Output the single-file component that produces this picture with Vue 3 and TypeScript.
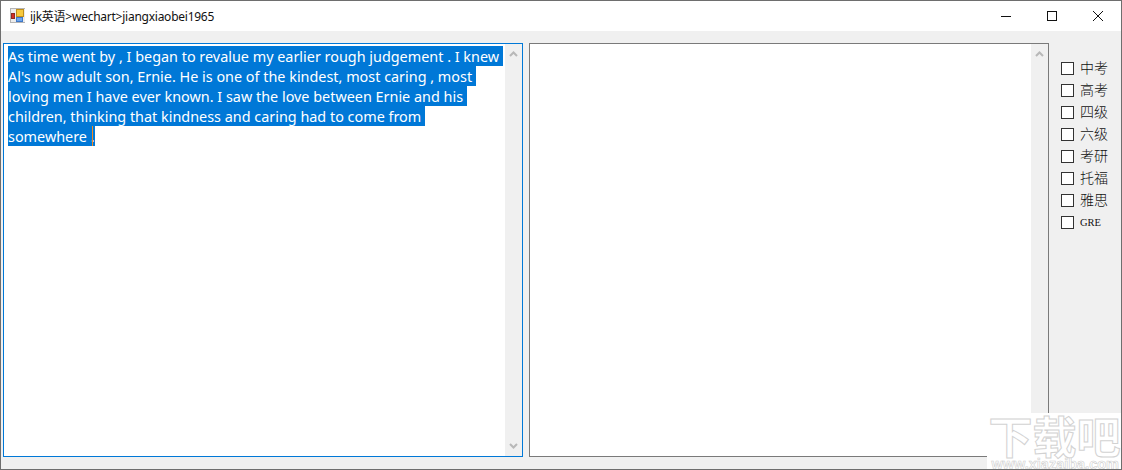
<script setup lang="ts">
const lines: string[] = [
  "As time went by , I began to revalue my earlier rough judgement . I knew ",
  "Al's now adult son, Ernie. He is one of the kindest, most caring , most ",
  "loving men I have ever known. I saw the love between Ernie and his ",
  "children, thinking that kindness and caring had to come from ",
  "somewhere .",
];
const options: string[] = ["中考", "高考", "四级", "六级", "考研", "托福", "雅思", "GRE"];
</script>

<template>
  <div class="window">
    <header class="titlebar">
      <svg class="app-icon" width="16" height="16" viewBox="0 0 16 16">
        <path d="M0 0.5h15M0.5 0v15M0 14.5h15" stroke="#b4b4b4" fill="none" />
        <rect x="1" y="1" width="14" height="13" fill="#ececec" />
        <rect x="6.5" y="1.5" width="7" height="7" fill="#f7c93e" stroke="#c08f1a" />
        <rect x="1.5" y="5.5" width="3" height="5" fill="#d42d26" stroke="#8d2a22" />
        <rect x="6.5" y="9.5" width="6" height="4" fill="#6ea6ec" stroke="#3f78c8" />
      </svg>
      <span class="title">ijk英语&gt;wechart&gt;jiangxiaobei1965</span>
      <div class="controls">
        <svg width="46" height="30" viewBox="0 0 46 30"><path d="M18 15.5h10" stroke="#111" fill="none" /></svg>
        <svg width="46" height="30" viewBox="0 0 46 30"><rect x="18.5" y="10.5" width="9" height="9" stroke="#111" fill="none" /></svg>
        <svg width="46" height="30" viewBox="0 0 46 30"><path d="M18 10l10 10M28 10l-10 10" stroke="#111" fill="none" /></svg>
      </div>
    </header>

    <main class="content">
      <section class="box box-active">
        <div class="text">
          <span v-for="line in lines" :key="line" class="line">{{ line }}</span>
          <span class="caret"></span>
        </div>
        <div class="scrollbar">
          <svg width="9" height="6" viewBox="0 0 9 6"><path d="M1 5l3.5-3.5L8 5" stroke="#b8b8b8" stroke-width="2" fill="none" /></svg>
          <svg width="9" height="6" viewBox="0 0 9 6"><path d="M1 1l3.5 3.5L8 1" stroke="#b8b8b8" stroke-width="2" fill="none" /></svg>
        </div>
      </section>

      <section class="box">
        <div class="text"></div>
        <div class="scrollbar">
          <svg width="9" height="6" viewBox="0 0 9 6"><path d="M1 5l3.5-3.5L8 5" stroke="#b8b8b8" stroke-width="2" fill="none" /></svg>
          <svg width="9" height="6" viewBox="0 0 9 6"><path d="M1 1l3.5 3.5L8 1" stroke="#b8b8b8" stroke-width="2" fill="none" /></svg>
        </div>
      </section>

      <aside class="options">
        <label v-for="o in options" :key="o" class="option">
          <span class="check"></span>
          <span class="opt-text" :class="{ latin: o === 'GRE' }">{{ o }}</span>
        </label>
      </aside>
    </main>

    <div class="watermark">
      <span class="wm-big">下载吧</span>
      <span class="wm-small">www.xiazaiba.com</span>
    </div>
  </div>
</template>

<style>
html, body { margin: 0; padding: 0; background: #fff; }
</style>

<style scoped>
.window {
  position: relative;
  width: 1122px;
  height: 470px;
  box-sizing: border-box;
  border: 1px solid #6e6e6e;
  background: #f0f0f0;
  display: flex;
  flex-direction: column;
  overflow: hidden;
  font-family: "Noto Sans", "Noto Sans CJK SC", sans-serif;
}
.titlebar {
  height: 30px;
  flex: none;
  background: #fff;
  display: flex;
  align-items: center;
  padding-left: 9px;
}
.app-icon { flex: none; }
.title {
  margin-left: 4px;
  font-size: 12px;
  color: #111;
  letter-spacing: -0.25px;
}
.controls {
  margin-left: auto;
  display: flex;
}
.controls svg { display: block; }
.content {
  flex: 1;
  display: flex;
  padding: 12px 0 12px 2px;
  min-height: 0;
}
.box {
  width: 520px;
  box-sizing: border-box;
  height: 414px;
  border: 1px solid #7a7a7a;
  background: #fff;
  display: flex;
}
.box + .box { margin-left: 6px; }
.box-active { border-color: #0078d7; }
.text {
  position: relative;
  flex: 1;
  padding: 2px 0 0 4px;
  display: flex;
  flex-direction: column;
  align-items: flex-start;
}
.line {
  display: block;
  box-sizing: border-box;
  height: 20px;
  padding-top: 1px;
  line-height: 20px;
  font-size: 14.4px;
  color: #fff;
  background: #0078d7;
  white-space: pre;
}
.caret {
  position: absolute;
  left: 88px;
  top: 82px;
  width: 1px;
  height: 20px;
  background: #f08a24;
}
.scrollbar {
  width: 17px;
  flex: none;
  background: #f0f0f0;
  display: flex;
  flex-direction: column;
  justify-content: space-between;
  align-items: center;
  padding: 7px 0;
  box-sizing: border-box;
}
.scrollbar svg { display: block; }
.options {
  margin-left: 12px;
  padding-top: 14px;
  display: flex;
  flex-direction: column;
}
.option {
  height: 22px;
  display: flex;
  align-items: center;
}
.check {
  width: 13px;
  height: 13px;
  box-sizing: border-box;
  border: 1px solid #333;
  background: #fff;
  flex: none;
}
.opt-text {
  margin-left: 6px;
  margin-top: -2px;
  font-size: 14px;
  font-weight: 300;
  color: #111;
  font-family: "Noto Sans CJK SC", sans-serif;
}
.latin {
  font-family: "Liberation Serif", serif;
  font-size: 10.5px;
  font-weight: 400;
  margin-top: 0;
}
.watermark {
  position: absolute;
  right: -1px;
  bottom: -1px;
  width: 135px;
  height: 57px;
  background: #fff;
  display: flex;
  flex-direction: column;
  align-items: center;
  font-family: "Noto Sans CJK SC", sans-serif;
}
.wm-big {
  font-size: 44px;
  line-height: 44px;
  height: 45px;
  font-weight: 700;
  color: #fff;
  -webkit-text-stroke: 1px #d2d2d2;
}
.wm-small {
  font-size: 14.5px;
  line-height: 12px;
  font-weight: 700;
  color: #fff;
  -webkit-text-stroke: 0.6px #cfcfcf;
  font-family: "Liberation Sans", sans-serif;
  align-self: flex-end;
  margin-right: 3px;
}
</style>
